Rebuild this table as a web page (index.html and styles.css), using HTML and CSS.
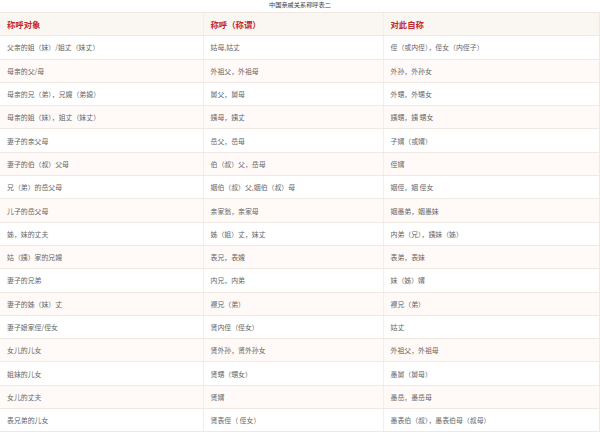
FILE: index.html
```html
<!DOCTYPE html>
<html lang="zh">
<head>
<meta charset="utf-8">
<link rel="stylesheet" href="styles.css">
</head>
<body>
<div class="title">中国亲戚关系称呼表二</div>
<table class="kin">
  <colgroup><col class="c1"><col class="c2"><col class="c3"></colgroup>
  <thead>
    <tr><th>称呼对象</th><th>称呼（称谓）</th><th>对此自称</th></tr>
  </thead>
  <tbody>
    <tr><td>父亲的姐（妹）/姐丈（妹丈）</td><td>姑母,姑丈</td><td>侄（或内侄），侄女（内侄子）</td></tr>
    <tr><td>母亲的父/母</td><td>外祖父，外祖母</td><td>外孙，外孙女</td></tr>
    <tr><td>母亲的兄（弟），兄嫂（弟媳）</td><td>舅父，舅母</td><td>外甥，外甥女</td></tr>
    <tr><td>母亲的姐（妹），姐丈（妹丈）</td><td>姨母，姨丈</td><td>姨甥，姨 甥女</td></tr>
    <tr><td>妻子的亲父母</td><td>岳父，岳母</td><td>子婿（或婿）</td></tr>
    <tr><td>妻子的伯（叔）父母</td><td>伯（叔）父，岳母</td><td>侄婿</td></tr>
    <tr><td>兄（弟）的岳父母</td><td>姻伯（叔）父,姻伯（叔）母</td><td>姻侄，姻 侄女</td></tr>
    <tr><td>儿子的岳父母</td><td>亲家翁，亲家母</td><td>姻愚弟，姻愚妹</td></tr>
    <tr><td>姊，妹的丈夫</td><td>姊（姐）丈，妹丈</td><td>内弟（兄），姨妹（姊）</td></tr>
    <tr><td>姑（姨）家的兄嫂</td><td>表兄，表嫂</td><td>表弟，表妹</td></tr>
    <tr><td>妻子的兄弟</td><td>内兄，内弟</td><td>妹（姊）婿</td></tr>
    <tr><td>妻子的姊（妹）丈</td><td>襟兄（弟）</td><td>襟兄（弟）</td></tr>
    <tr><td>妻子娘家侄/侄女</td><td>贤内侄（侄女）</td><td>姑丈</td></tr>
    <tr><td>女儿的儿女</td><td>贤外孙，贤外孙女</td><td>外祖父，外祖母</td></tr>
    <tr><td>姐妹的儿女</td><td>贤甥（甥女）</td><td>愚舅（舅母）</td></tr>
    <tr><td>女儿的丈夫</td><td>贤婿</td><td>愚岳，愚岳母</td></tr>
    <tr><td>表兄弟的儿女</td><td>贤表侄（ 侄女）</td><td>愚表伯（叔），愚表伯母（叔母）</td></tr>
  </tbody>
</table>
</body>
</html>
```
FILE: styles.css
```css
html, body {
  margin: 0;
  padding: 0;
  background: #ffffff;
}
body {
  font-family: "Noto Sans CJK SC", "Liberation Sans", sans-serif;
  width: 600px;
  height: 432px;
  overflow: hidden;
}
.title {
  height: 12px;
  line-height: 10px;
  font-size: 6.2px;
  color: #444;
  text-align: center;
}
.kin {
  width: 599px;
  border-collapse: collapse;
  table-layout: fixed;
  border: 1px solid #efe8e3;
  border-left: none;
}
.c1 { width: 203px; }
.c2 { width: 180px; }
.c3 { width: 216px; }
.kin tr { height: 23.3px; }
.kin th, .kin td {
  border-top: 1px solid #efe8e3;
  border-bottom: 1px solid #efe8e3;
  border-left: 1px solid #f3eeea;
  padding: 0 0 0 7px;
  text-align: left;
  vertical-align: middle;
  white-space: nowrap;
  overflow: hidden;
}
.kin th:first-child, .kin td:first-child { border-left: none; }
.kin th {
  background: #faf6f2;
  color: #c0272d;
  font-size: 8.4px;
  font-weight: bold;
}
.kin td {
  color: #666;
  font-size: 6.9px;
}
.kin tbody tr:nth-child(even) td { background: #fffaf8; }
```
